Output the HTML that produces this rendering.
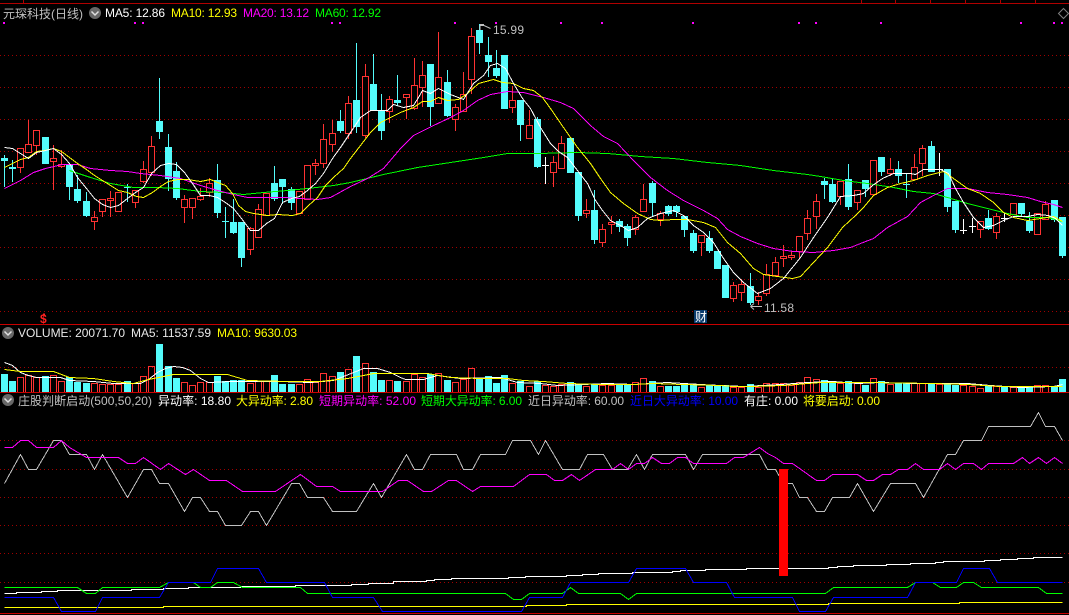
<!DOCTYPE html>
<html lang="zh">
<head>
<meta charset="utf-8">
<title>元琛科技(日线)</title>
<style>
html,body{margin:0;padding:0;background:#000;width:1069px;height:615px;overflow:hidden}
svg{display:block;position:absolute;left:0;top:0}
text{font-family:"Liberation Sans","Noto Sans CJK SC",sans-serif;font-size:12px}
</style>
</head>
<body>
<svg width="1069" height="615" viewBox="0 0 1069 615" xmlns="http://www.w3.org/2000/svg">
<defs>
<pattern id="dots" patternUnits="userSpaceOnUse" x="0" y="0" width="4" height="1">
<rect x="0" y="0" width="1" height="1" fill="#a00000"/>
</pattern>
</defs>
<rect width="1069" height="615" fill="#000"/>

<!-- frame lines -->
<g stroke="#b00000" stroke-width="1" fill="none" shape-rendering="crispEdges">
<path d="M0 3.5H1069M23.5 0V3M861.5 0V3M895.5 0V3M930.5 0V3M965.5 0V3M1000.5 0V3M1035.5 0V3"/>
</g>
<g stroke="#c80000" stroke-width="1" fill="none" shape-rendering="crispEdges">
<path d="M0 324.5H1069M0 392.5H1069M0 613.5H1069"/>
</g>

<!-- dotted grids -->
<g fill="url(#dots)" shape-rendering="crispEdges">
<rect x="0" y="55" width="1069" height="1"/><rect x="0" y="87" width="1069" height="1"/><rect x="0" y="119" width="1069" height="1"/><rect x="0" y="151" width="1069" height="1"/><rect x="0" y="183" width="1069" height="1"/><rect x="0" y="215" width="1069" height="1"/><rect x="0" y="247" width="1069" height="1"/><rect x="0" y="279" width="1069" height="1"/><rect x="0" y="311" width="1069" height="1"/>
<rect x="0" y="367" width="1069" height="1"/>
<rect x="0" y="440" width="1069" height="1"/><rect x="0" y="469" width="1069" height="1"/><rect x="0" y="497" width="1069" height="1"/><rect x="0" y="525" width="1069" height="1"/><rect x="0" y="553" width="1069" height="1"/><rect x="0" y="582" width="1069" height="1"/>
</g>

<!-- magenta markers -->
<g fill="#ff00ff" shape-rendering="crispEdges">
<rect x="3" y="22" width="2" height="2"/><rect x="134" y="22" width="2" height="2"/><rect x="142" y="22" width="2" height="2"/><rect x="331" y="22" width="2" height="2"/><rect x="339" y="22" width="2" height="2"/><rect x="454" y="22" width="2" height="2"/><rect x="495" y="22" width="2" height="2"/><rect x="560" y="22" width="2" height="2"/><rect x="601" y="22" width="2" height="2"/><rect x="692" y="22" width="2" height="2"/><rect x="798" y="22" width="2" height="2"/><rect x="815" y="22" width="2" height="2"/><rect x="880" y="22" width="2" height="2"/><rect x="1020" y="22" width="2" height="2"/><rect x="1053" y="22" width="2" height="2"/><rect x="1061" y="22" width="2" height="2"/>
</g>
<path d="M1063.5 8.5L1068.5 13.5L1063.5 18.5L1058.5 13.5Z" fill="none" stroke="#808080"/>

<!-- candle wicks: cyan -->
<path fill="none" stroke="#54fcfc" stroke-width="1" shape-rendering="crispEdges" d="M4.5 155V187M12.5 160V182M69.5 164V200M77.5 175V203M86.5 192V217M127.5 184V202M159.5 78V139M168.5 134V191M176.5 162V200M217.5 164V218M225.5 207V238M233.5 199V234M241.5 222V267M274.5 166V201M282.5 179V204M291.5 187V210M340.5 110V133M356.5 43V133M373.5 54V110M381.5 94V140M397.5 75V106M430.5 64V126M447.5 70V117M479.5 24V54M488.5 37V77M496.5 50V78M520.5 100V141M537.5 117V168M578.5 172V221M594.5 190V244M619.5 219V232M627.5 224V246M652.5 181V216M668.5 205V216M676.5 205V217M684.5 216V237M693.5 230V253M709.5 231V253M750.5 273V305M824.5 178V199M832.5 178V203M848.5 164V210M865.5 180V197M881.5 157V176M898.5 161V183M906.5 174V198M931.5 141V172M947.5 169V212M955.5 201V233M988.5 210V230M1021.5 203V216M1029.5 212V233M1054.5 200V222M1062.5 217V258"/>
<!-- candle bodies: cyan -->
<path fill="none" stroke="#54fcfc" stroke-width="7" shape-rendering="crispEdges" d="M4.5 158V161M12.5 167V169M45.5 137V164M69.5 164V187M77.5 189V201M86.5 201V216M127.5 187V188M159.5 121V132M168.5 147V179M176.5 171V198M217.5 180V213M225.5 221V222M233.5 222V233M241.5 222V258M274.5 183V199M282.5 179V187M291.5 189V203M340.5 121V131M356.5 100V127M373.5 84V110M381.5 110V131M397.5 100V103M430.5 64V107M447.5 82V116M479.5 30V43M488.5 55V62M496.5 68V76M504.5 55V109M520.5 100V125M537.5 119V167M570.5 138V173M578.5 172V216M594.5 210V240M619.5 221V227M627.5 226V238M652.5 183V203M668.5 206V214M676.5 206V212M684.5 216V230M693.5 233V251M709.5 238V251M717.5 251V269M725.5 265V298M750.5 286V303M824.5 181V185M832.5 184V202M848.5 179V207M865.5 180V189M881.5 157V172M898.5 169V176M906.5 184V185M931.5 146V172M947.5 169V207M955.5 201V230M988.5 218V229M1021.5 203V214M1029.5 221V231M1054.5 200V220M1062.5 217V256"/>
<!-- white cross candles -->
<path fill="none" stroke="#ffffff" stroke-width="1" shape-rendering="crispEdges" d="M545.5 157V184M542 165.5H549M939.5 153V176M936 169.5H943M963.5 219V234M960 230.5H967M972.5 218V233M969 226.5H976M1004.5 213V222M1001 218.5H1008"/>
<!-- candle wicks: red -->
<path fill="none" stroke="#ff3232" stroke-width="1" shape-rendering="crispEdges" d="M20.5 148V173M28.5 120V153M36.5 130V155M53.5 145V190M61.5 150V168M94.5 211V230M102.5 199V217M110.5 191V217M135.5 190V208M143.5 161V183M151.5 136V176M184.5 195V223M192.5 198V219M200.5 188V201M209.5 178V197M250.5 227V255M258.5 204V238M315.5 159V175M323.5 124V168M332.5 120V152M348.5 96V139M365.5 64V138M389.5 96V123M406.5 94V119M414.5 58V110M422.5 61V107M438.5 32V103M455.5 104V131M463.5 72V111M471.5 28V94M512.5 86V113M529.5 110V139M553.5 156V187M561.5 136V168M586.5 199V218M602.5 224V247M611.5 216V234M635.5 215V235M643.5 184V211M660.5 211V226M701.5 235V256M733.5 282V302M741.5 279V301M758.5 292V305M766.5 264V296M775.5 257V275M783.5 245V267M791.5 251V260M799.5 236V258M807.5 210V240M816.5 194V229M840.5 181V205M857.5 190V210M890.5 158V176M914.5 154V179M922.5 145V176M980.5 221V238M996.5 213V239M1037.5 213V234M1045.5 201V219"/>
<!-- candle bodies: red -->
<path fill="#000" stroke="#ff3232" stroke-width="1" shape-rendering="crispEdges" d="M17.5 148.5h6V167.5h-6zM25.5 144.5h6V152.5h-6zM33.5 130.5h6V145.5h-6zM50.5 158.5h6V161.5h-6zM58.5 164.5h6V166.5h-6zM91.5 217.5h6V221.5h-6zM99.5 199.5h6V211.5h-6zM107.5 198.5h6V200.5h-6zM115.5 192.5h6V211.5h-6zM132.5 190.5h6V202.5h-6zM140.5 169.5h6V181.5h-6zM148.5 146.5h6V172.5h-6zM181.5 199.5h6V207.5h-6zM189.5 198.5h6V207.5h-6zM197.5 196.5h6V199.5h-6zM206.5 183.5h6V192.5h-6zM247.5 228.5h6V249.5h-6zM255.5 209.5h6V237.5h-6zM263.5 193.5h6V215.5h-6zM296.5 191.5h6V213.5h-6zM304.5 165.5h6V199.5h-6zM312.5 163.5h6V165.5h-6zM320.5 139.5h6V163.5h-6zM329.5 133.5h6V144.5h-6zM345.5 103.5h6V133.5h-6zM362.5 76.5h6V135.5h-6zM386.5 99.5h6V111.5h-6zM403.5 94.5h6V97.5h-6zM411.5 85.5h6V108.5h-6zM419.5 75.5h6V87.5h-6zM435.5 77.5h6V103.5h-6zM452.5 107.5h6V119.5h-6zM460.5 94.5h6V111.5h-6zM468.5 36.5h6V79.5h-6zM509.5 100.5h6V107.5h-6zM526.5 125.5h6V138.5h-6zM550.5 162.5h6V172.5h-6zM558.5 143.5h6V168.5h-6zM583.5 210.5h6V213.5h-6zM599.5 229.5h6V242.5h-6zM608.5 222.5h6V224.5h-6zM632.5 217.5h6V229.5h-6zM640.5 199.5h6V211.5h-6zM657.5 213.5h6V219.5h-6zM698.5 235.5h6V242.5h-6zM730.5 285.5h6V298.5h-6zM738.5 284.5h6V292.5h-6zM755.5 296.5h6V300.5h-6zM763.5 274.5h6V293.5h-6zM772.5 262.5h6V275.5h-6zM780.5 256.5h6V258.5h-6zM788.5 255.5h6V257.5h-6zM796.5 236.5h6V251.5h-6zM804.5 218.5h6V233.5h-6zM813.5 201.5h6V216.5h-6zM837.5 181.5h6V196.5h-6zM854.5 190.5h6V202.5h-6zM870.5 160.5h6V194.5h-6zM887.5 169.5h6V173.5h-6zM911.5 167.5h6V179.5h-6zM919.5 148.5h6V163.5h-6zM977.5 221.5h6V229.5h-6zM993.5 216.5h6V232.5h-6zM1010.5 203.5h6V214.5h-6zM1034.5 213.5h6V234.5h-6zM1042.5 204.5h6V219.5h-6z"/>

<!-- Main MAs -->
<g fill="none" stroke-width="1" shape-rendering="crispEdges" transform="translate(.5 .5)">
<polyline stroke="#00ff00" points="69,170 90,177 110,183 133,187 157,187 177,188 200,191 223,192 243,194 263,192 287,190 307,188 333,185 350,182 383,174 417,167 450,162 483,157 507,153 537,153 577,152 607,153 640,156 673,158 707,162 740,165 773,170 807,174 820,176 843,180 867,183 893,187 913,191 933,193 947,197 967,203 987,208 1007,213 1027,217 1047,217 1062,221"/>
<polyline stroke="#ff00ff" points="4,188 20,180 33,172 45,168 62,164 77,164 90,168 110,170 127,171 140,173 160,175 180,178 200,185 217,190 233,194 247,197 267,197 283,197 300,198 317,199 330,197 350,186 367,178 383,168 400,148 413,135 433,125 450,117 463,110 477,100 490,94 507,91 523,92 543,97 560,102 573,108 590,125 603,136 617,143 633,160 650,177 667,190 683,200 703,210 717,218 727,229 740,236 757,243 773,248 793,251 813,252 833,250 850,247 860,243 873,238 887,227 907,216 920,202 933,195 947,188 967,188 987,192 1007,194 1027,197 1040,201 1053,204 1062,207"/>
<polyline stroke="#ffff00" points="4,167 12,163 20,159 28,157 36,151 44,150 53,148 61,151 69,157 77,163 86,169 94,175 102,180 110,185 118,190 127,192 136,196 143,197 152,192 160,186 168,181 177,179 187,179 200,181 210,179 217,182 225,185 232,193 238,205 245,211 253,213 267,215 277,214 292,215 300,213 308,205 317,197 325,185 333,177 343,168 350,158 360,145 370,132 380,122 390,117 400,112 413,107 422,101 430,101 438,97 447,100 458,99 467,93 478,83 493,79 502,82 513,83 523,88 533,90 542,97 550,108 563,127 577,147 590,163 600,178 610,192 623,203 637,213 650,219 660,220 673,219 687,219 703,222 715,227 727,242 740,253 753,268 763,274 777,276 792,278 800,276 813,262 827,247 842,227 855,215 863,207 873,195 887,187 900,183 913,180 927,175 943,171 953,178 967,188 980,193 993,202 1003,212 1013,217 1027,220 1040,218 1053,216 1062,221"/>
<polyline stroke="#ffffff" points="4,147 12,148 20,153 28,158 36,152 45,150 53,148 61,154 69,163 77,177 86,188 94,198 102,204 110,207 118,205 127,198 135,192 143,187 151,173 160,165 168,163 176,164 184,172 192,183 200,195 209,195 217,197 225,202 233,208 241,218 250,230 258,230 266,223 274,218 282,202 291,198 299,196 307,190 315,183 323,173 332,158 340,147 350,132 360,117 370,110 387,110 393,104 403,107 413,105 418,97 422,90 430,93 438,88 450,94 463,99 473,83 483,75 490,65 497,63 505,68 513,83 522,98 530,108 540,127 550,143 558,151 567,157 577,170 587,183 595,200 602,210 610,220 620,225 628,230 637,227 647,218 660,213 673,210 683,215 693,225 703,232 713,242 723,258 733,272 743,282 757,293 770,288 783,278 800,257 813,237 827,217 840,196 853,195 863,193 872,185 882,178 893,173 910,173 915,174 923,169 940,169 948,173 955,188 963,202 973,217 983,227 993,225 1003,220 1013,216 1027,216 1037,214 1048,215 1055,218 1062,225"/>
</g>

<!-- Volume bars -->
<path fill="none" stroke="#54fcfc" stroke-width="7" shape-rendering="crispEdges" d="M4.5 374V392M12.5 381V392M45.5 376V392M69.5 377V392M77.5 382V392M86.5 383V392M127.5 381V392M159.5 344V392M168.5 366V392M176.5 378V392M217.5 376V392M225.5 381V392M233.5 380V392M241.5 380V392M274.5 375V392M282.5 384V392M291.5 384V392M340.5 372V392M356.5 356V392M373.5 372V392M381.5 380V392M397.5 381V392M430.5 374V392M447.5 380V392M479.5 378V392M488.5 376V392M496.5 383V392M504.5 375V392M520.5 381V392M537.5 381V392M570.5 382V392M578.5 384V392M594.5 384V392M619.5 385V392M627.5 385V392M652.5 381V392M668.5 386V392M676.5 386V392M684.5 385V392M693.5 385V392M709.5 385V392M717.5 385V392M725.5 385V392M750.5 384V392M824.5 380V392M832.5 382V392M848.5 381V392M865.5 385V392M881.5 381V392M898.5 383V392M906.5 383V392M931.5 383V392M947.5 383V392M955.5 385V392M988.5 386V392M1004.5 387V392M1021.5 387V392M1029.5 387V392M1054.5 386V392M1062.5 379V392"/>
<path fill="none" stroke="#ff3232" stroke-width="1" shape-rendering="crispEdges" d="M17.5 392V377.5h6V392M25.5 392V375.5h6V392M33.5 392V377.5h6V392M50.5 392V375.5h6V392M58.5 392V381.5h6V392M91.5 392V383.5h6V392M99.5 392V384.5h6V392M107.5 392V384.5h6V392M115.5 392V384.5h6V392M132.5 392V383.5h6V392M140.5 392V376.5h6V392M148.5 392V366.5h6V392M181.5 392V382.5h6V392M189.5 392V385.5h6V392M197.5 392V382.5h6V392M206.5 392V382.5h6V392M247.5 392V383.5h6V392M255.5 392V381.5h6V392M263.5 392V381.5h6V392M296.5 392V384.5h6V392M304.5 392V379.5h6V392M312.5 392V382.5h6V392M320.5 392V373.5h6V392M329.5 392V376.5h6V392M345.5 392V369.5h6V392M362.5 392V363.5h6V392M386.5 392V380.5h6V392M403.5 392V381.5h6V392M411.5 392V374.5h6V392M419.5 392V377.5h6V392M435.5 392V373.5h6V392M452.5 392V382.5h6V392M460.5 392V379.5h6V392M468.5 392V368.5h6V392M509.5 392V383.5h6V392M526.5 392V386.5h6V392M542.5 392V385.5h6V392M550.5 392V386.5h6V392M558.5 392V384.5h6V392M583.5 392V386.5h6V392M599.5 392V385.5h6V392M608.5 392V385.5h6V392M632.5 392V382.5h6V392M640.5 392V378.5h6V392M657.5 392V386.5h6V392M698.5 392V387.5h6V392M730.5 392V387.5h6V392M738.5 392V387.5h6V392M755.5 392V387.5h6V392M763.5 392V383.5h6V392M772.5 392V383.5h6V392M780.5 392V383.5h6V392M788.5 392V385.5h6V392M796.5 392V382.5h6V392M804.5 392V377.5h6V392M813.5 392V379.5h6V392M837.5 392V383.5h6V392M854.5 392V383.5h6V392M870.5 392V378.5h6V392M887.5 392V384.5h6V392M911.5 392V383.5h6V392M919.5 392V383.5h6V392M936.5 392V384.5h6V392M960.5 392V385.5h6V392M969.5 392V386.5h6V392M977.5 392V388.5h6V392M993.5 392V386.5h6V392M1010.5 392V387.5h6V392M1034.5 392V385.5h6V392M1042.5 392V385.5h6V392"/>
<g fill="none" stroke-width="1" shape-rendering="crispEdges" transform="translate(.5 .5)">
<polyline stroke="#ffffff" points="4,362 12,365 20,372 28,375 36,377 60,377 69,380 93,381 113,383 140,383 148,379 157,372 165,368 173,366 182,367 190,370 200,378 208,382 230,381 253,381 280,381 310,382 333,380 353,372 363,368 377,368 390,372 400,377 405,379 423,379 437,375 460,378 500,377 517,382 540,383 557,385 607,383 633,384 667,382 700,384 720,385 743,386 780,384 807,382 833,381 857,383 880,382 913,383 940,383 967,383 990,385 1020,387 1053,386 1062,384"/>
<polyline stroke="#ffff00" points="4,369 20,371 53,371 69,377 93,378 113,381 133,383 148,379 163,376 173,374 200,374 227,374 247,380 287,381 320,381 347,378 363,375 373,373 427,373 450,377 480,378 507,378 523,380 543,381 567,383 600,384 633,384 653,383 683,384 720,385 733,386 750,386 783,385 820,382 867,382 933,383 967,384 1000,386 1033,386 1062,386"/>
</g>

<!-- Bottom indicator -->
<g fill="none" stroke-width="1" shape-rendering="crispEdges" transform="translate(.5 .5)">
<polyline stroke="#c0c0c0" points="4,483 20,454 28,469 36,469 53,440 61,440 69,454 86,454 94,469 102,454 127,497 143,469 151,469 159,483 168,483 184,511 192,497 200,497 209,511 217,511 225,525 241,525 250,511 258,511 266,525 291,483 299,483 307,497 323,497 332,511 356,511 373,483 381,497 406,454 414,469 422,469 430,454 456,454 463,469 472,469 480,454 505,454 512,440 530,440 538,454 545,440 562,469 579,469 587,454 603,454 612,469 627,469 636,454 644,469 652,454 685,454 693,469 702,454 759,454 767,469 775,469 783,483 792,483 799,497 807,497 816,511 824,511 832,497 849,497 857,483 873,511 890,483 915,483 923,497 947,454 955,454 963,440 981,440 988,426 1030,426 1038,412 1045,426 1054,426 1062,440"/>
<polyline stroke="#ff00ff" points="4,447 12,447 20,440 28,440 36,447 53,447 61,440 69,447 86,457 118,457 127,463 135,463 143,457 160,469 168,463 185,474 193,469 209,480 226,480 242,491 275,491 300,474 316,486 332,486 340,491 382,491 398,480 407,480 423,491 431,491 448,480 456,480 472,491 480,486 513,486 529,474 546,474 554,480 562,480 571,474 579,480 595,469 612,469 620,463 628,469 636,463 644,463 652,457 661,463 669,463 677,457 685,457 693,463 726,463 734,457 743,457 759,447 767,453 775,457 783,463 792,463 816,480 824,480 832,474 857,474 866,480 873,480 882,474 890,474 898,469 907,469 915,463 923,469 939,469 947,463 955,469 963,463 973,463 981,469 988,463 1013,463 1022,457 1029,463 1038,457 1046,463 1054,457 1062,463"/>
<polyline stroke="#ffffff" points="4,593 16,593 16,592 41,592 41,591 57,591 57,590 131,590 131,589 163,589 163,588 188,588 188,587 240,587 240,586 295,586 295,585 351,585 351,584 368,584 368,583 393,583 393,581 426,581 426,580 434,580 434,579 451,579 451,578 508,578 508,577 525,577 525,576 566,576 566,575 582,575 582,574 598,574 598,573 632,573 632,572 672,572 672,571 680,571 680,570 705,570 705,569 746,569 746,568 828,568 828,567 837,567 837,566 853,566 853,565 886,565 886,564 910,564 910,563 935,563 935,562 943,562 943,561 984,561 984,560 1000,560 1000,559 1017,559 1017,558 1033,558 1033,557 1062,557"/>
<polyline stroke="#ffff00" points="4,607 163,607 163,606 526,606 526,605 566,605 566,604 828,604 828,603 959,603 959,602 1062,602"/>
<polyline stroke="#00ff00" points="4,587 77,587 86,593 95,593 102,587 159,587 168,582 193,582 200,587 210,587 217,582 233,582 242,587 300,587 307,593 505,593 513,599 521,599 529,593 562,593 570,587 578,593 620,593 628,599 636,593 825,593 833,587 907,587 915,582 932,582 940,587 956,587 963,582 973,582 981,587 1038,587 1046,593 1062,593"/>
<polyline stroke="#0000ff" stroke-width="1" points="4,597 53,597 61,611 95,611 102,597 159,597 168,582 210,582 217,568 258,568 266,582 324,582 332,597 373,597 382,611 521,611 529,597 562,597 570,582 628,582 636,568 685,568 693,582 726,582 734,597 792,597 799,611 825,611 833,597 907,597 915,582 956,582 963,568 989,568 997,582 1062,582"/>
</g>
<rect x="779" y="469" width="9" height="107" fill="#ff0000"/>

<!-- Title row 1 -->
<text x="3" y="18" fill="#c0c0c0" font-size="12">元琛科技(日线)</text>
<circle cx="95" cy="13" r="6" fill="#686868"/>
<path d="M91.5 11.5L95 15L98.5 11.5" fill="none" stroke="#e0e0e0" stroke-width="1.5"/>
<text x="105" y="17" fill="#ffffff" textLength="60">MA5: 12.86</text>
<text x="171" y="17" fill="#ffff00" textLength="66">MA10: 12.93</text>
<text x="243" y="17" fill="#ff00ff" textLength="66">MA20: 13.12</text>
<text x="315" y="17" fill="#00ff00" textLength="66">MA60: 12.92</text>

<!-- high/low labels -->
<path d="M490.5 28.5L484 25.5H480M480 25V30M480 24.5H484" fill="none" stroke="#c0c0c0" stroke-width="1"/>
<text x="493" y="34" fill="#c0c0c0" textLength="31">15.99</text>
<path d="M750.5 306.5H762M750.5 306.5L754 303.5M750.5 306.5L754 309.5" fill="none" stroke="#c0c0c0" stroke-width="1"/>
<text x="764" y="312" fill="#c0c0c0" textLength="30">11.58</text>

<!-- markers -->
<rect x="694" y="310" width="13" height="13" fill="#0a3c6e"/>
<text x="695" y="321" fill="#ffffff" font-size="11">财</text>
<text x="40" y="323" fill="#ff2020" font-size="12" font-weight="bold">$</text>
<path d="M44 313.5V315" stroke="#ff2020" stroke-width="2" fill="none"/>

<!-- Title row 2 -->
<circle cx="8" cy="333" r="6" fill="#686868"/>
<path d="M4.5 331.5L8 335L11.5 331.5" fill="none" stroke="#e0e0e0" stroke-width="1.5"/>
<text x="18" y="337" fill="#e8e8e8" textLength="107">VOLUME: 20071.70</text>
<text x="131" y="337" fill="#e8e8e8" textLength="80">MA5: 11537.59</text>
<text x="217" y="337" fill="#ffff00" textLength="80">MA10: 9630.03</text>

<!-- Title row 3 -->
<circle cx="8" cy="400" r="6" fill="#686868"/>
<path d="M4.5 398.5L8 402L11.5 398.5" fill="none" stroke="#e0e0e0" stroke-width="1.5"/>
<text x="18" y="405" fill="#c0c0c0" textLength="134">庄股判断启动(500,50,20)</text>
<text x="158" y="405" fill="#ffffff" textLength="73">异动率: 18.80</text>
<text x="236" y="405" fill="#ffff00" textLength="77">大异动率: 2.80</text>
<text x="319" y="405" fill="#ff00ff" textLength="97">短期异动率: 52.00</text>
<text x="421" y="405" fill="#00ff00" textLength="101">短期大异动率: 6.00</text>
<text x="528" y="405" fill="#c0c0c0" textLength="96">近日异动率: 60.00</text>
<text x="630" y="405" fill="#0000ff" textLength="108">近日大异动率: 10.00</text>
<text x="744" y="405" fill="#ffffff" textLength="54">有庄: 0.00</text>
<text x="803" y="405" fill="#ffff00" textLength="77">将要启动: 0.00</text>
</svg>
</body>
</html>
